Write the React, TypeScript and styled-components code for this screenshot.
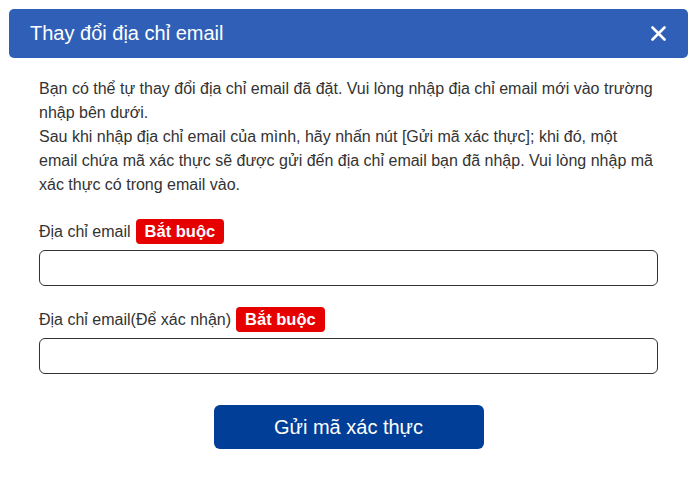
import React from "react";
import styled, { createGlobalStyle } from "styled-components";

const Global = createGlobalStyle`
  html, body { margin: 0; padding: 0; background: #fff; }
  body { font-family: "Liberation Sans", Arial, sans-serif; color: #333; }
  * { box-sizing: border-box; }
`;

const Modal = styled.div`
  width: 697px;
  padding: 9px 9px 0 9px;
  display: flex;
  flex-direction: column;
`;

const Header = styled.div`
  height: 49px;
  background: #2f5fb6;
  border-radius: 5px;
  display: flex;
  align-items: center;
  justify-content: space-between;
  padding: 0 21px 0 21px;
`;

const Title = styled.h2`
  margin: 0;
  font-size: 20px;
  font-weight: 400;
  color: #fff;
`;

const CloseButton = styled.button`
  border: 0;
  background: transparent;
  padding: 0;
  width: 18px;
  height: 18px;
  display: flex;
  align-items: center;
  justify-content: center;
  cursor: pointer;
`;

const Body = styled.div`
  padding: 19px 30px 0 30px;
  display: flex;
  flex-direction: column;
`;

const Intro = styled.p`
  margin: 0 0 22px 0;
  font-size: 16px;
  line-height: 24px;
`;

const Field = styled.div`
  display: flex;
  flex-direction: column;
  gap: 6px;
  margin-bottom: 21px;
`;

const LabelRow = styled.label`
  display: flex;
  align-items: center;
  gap: 5px;
  height: 25px;
  font-size: 16px;
`;

const Badge = styled.span`
  background: #e60000;
  color: #fff;
  font-weight: 700;
  font-size: 16.5px;
  border-radius: 4px;
  padding: 0 9px;
  height: 25px;
  line-height: 25px;
`;

const Input = styled.input`
  height: 36px;
  width: 100%;
  border: 1px solid #333;
  border-radius: 6px;
  font-size: 16px;
  padding: 0 10px;
  font-family: inherit;
`;

const Actions = styled.div`
  display: flex;
  justify-content: center;
  padding-top: 10px;
`;

const Submit = styled.button`
  width: 270px;
  height: 44px;
  background: #003e97;
  color: #fff;
  border: 0;
  border-radius: 6px;
  font-family: inherit;
  font-size: 20px;
  cursor: pointer;
`;

export default function App() {
  return (
    <>
      <Global />
      <Modal>
        <Header>
          <Title>Thay đổi địa chỉ email</Title>
          <CloseButton aria-label="close">
            <svg width="15" height="15" viewBox="0 0 15 15">
              <path d="M1.5 1.5 L13.5 13.5 M13.5 1.5 L1.5 13.5" stroke="#fff" strokeWidth="2.6" strokeLinecap="round" />
            </svg>
          </CloseButton>
        </Header>
        <Body>
          <Intro>
            Bạn có thể tự thay đổi địa chỉ email đã đặt. Vui lòng nhập địa chỉ email mới vào trường nhập bên dưới.
            <br />
            Sau khi nhập địa chỉ email của mình, hãy nhấn nút [Gửi mã xác thực]; khi đó, một email chứa mã xác thực sẽ được gửi đến địa chỉ email bạn đã nhập. Vui lòng nhập mã xác thực có trong email vào.
          </Intro>
          <Field>
            <LabelRow>
              Địa chỉ email <Badge>Bắt buộc</Badge>
            </LabelRow>
            <Input type="email" />
          </Field>
          <Field>
            <LabelRow>
              Địa chỉ email(Để xác nhận) <Badge>Bắt buộc</Badge>
            </LabelRow>
            <Input type="email" />
          </Field>
          <Actions>
            <Submit>Gửi mã xác thực</Submit>
          </Actions>
        </Body>
      </Modal>
    </>
  );
}
